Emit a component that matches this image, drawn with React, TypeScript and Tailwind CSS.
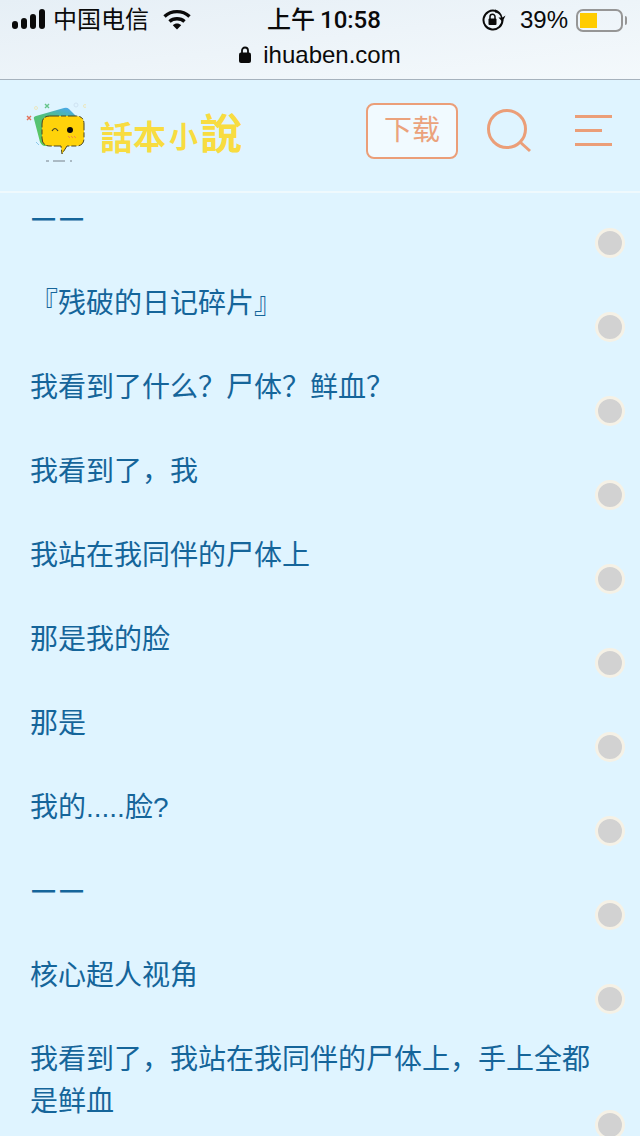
const paragraphs = [
  '一一',
  '『残破的日记碎片』',
  '我看到了什么\uFF1F尸体\uFF1F鲜血\uFF1F',
  '我看到了\uFF0C我',
  '我站在我同伴的尸体上',
  '那是我的脸',
  '那是',
  '我的.....脸?',
  '一一',
  '核心超人视角',
  '我看到了\uFF0C我站在我同伴的尸体上\uFF0C手上全都是鲜血',
];

function Signal() {
  return (
    <svg width="34" height="22" viewBox="0 0 34 22" className="shrink-0">
      <rect x="0" y="12" width="6" height="8" rx="3" fill="#0a0a0a" />
      <rect x="9" y="9" width="6" height="11" rx="3" fill="#0a0a0a" />
      <rect x="18" y="5" width="6" height="15" rx="3" fill="#0a0a0a" />
      <rect x="27" y="0" width="6" height="20" rx="3" fill="#0a0a0a" />
    </svg>
  );
}

function Wifi() {
  return (
    <svg width="28" height="22" viewBox="0 0 28 22" className="shrink-0">
      <path d="M1.5 7.5C8.5 1 19.5 1 26.5 7.5" fill="none" stroke="#0a0a0a" strokeWidth="3.4" />
      <path d="M6.5 12.5C10.5 8.8 17.5 8.8 21.5 12.5" fill="none" stroke="#0a0a0a" strokeWidth="3.4" />
      <path d="M9.8 16.2C12 14 16 14 18.2 16.2L14 20.5Z" fill="#0a0a0a" />
    </svg>
  );
}

function RotationLock() {
  return (
    <svg width="24" height="22" viewBox="0 0 24 22" className="shrink-0">
      <path d="M20.5 11A9.5 9.5 0 1 1 14 2" fill="none" stroke="#0a0a0a" strokeWidth="2" />
      <path d="M13 0.5C17 1.5 19.5 4 20.5 8.5L23.5 6.5L20.5 13L16.5 8.5L19 8.5C18 5.5 16 4 13 3.5Z" fill="#0a0a0a" />
      <rect x="6.5" y="9.5" width="8" height="6.5" rx="1" fill="#0a0a0a" />
      <path d="M8 10V7.8a2.5 2.5 0 0 1 5 0V10" fill="none" stroke="#0a0a0a" strokeWidth="1.5" />
    </svg>
  );
}

function Logo() {
  return (
    <svg width="60" height="64" viewBox="0 0 60 64" className="shrink-0">
      <defs>
        <linearGradient id="card" x1="0.7" y1="0" x2="0.3" y2="1">
          <stop offset="0" stopColor="#4aa8ec" />
          <stop offset="0.35" stopColor="#52c07c" />
          <stop offset="1" stopColor="#5cc85a" />
        </linearGradient>
      </defs>
      <path d="M8 20Q7 18 10 17L38 9Q41 8 43 10L50 17L56 42L19 47Q16 47 14 43L8 20Z" fill="url(#card)" />
      <path
        d="M24 17H50Q58 17 58 25V39Q58 47 50 47H41L36 55L35 47H24Q16 47 16 39V25Q16 17 24 17Z"
        fill="#ffd30a"
        stroke="#4a4420"
        strokeWidth="1"
        strokeDasharray="9 2 5 2"
      />
      <path d="M26 32Q29 27 32 32" fill="none" stroke="#3a3a2a" strokeWidth="1.2" />
      <circle cx="44" cy="31" r="3" fill="#0a0a0a" />
      <path d="M45 37L47 39M48 37L50 39M42 37L44 39" stroke="#f08a4a" strokeWidth="1" />
      <path d="M20 62H23M27 62H39M44 62H46" stroke="#77808a" strokeWidth="1" />
      <path d="M1 17L5 21M5 17L1 21" stroke="#e2725b" strokeWidth="1.4" />
      <path d="M19 5L23 9M23 5L19 9" stroke="#66c58a" strokeWidth="1.4" />
      <circle cx="50" cy="6" r="2" fill="none" stroke="#cfe3f2" strokeWidth="1" />
      <circle cx="59" cy="7" r="1.5" fill="none" stroke="#ece8c0" strokeWidth="1" />
      <circle cx="10" cy="9" r="1.5" fill="none" stroke="#ece8c0" strokeWidth="1" />
      <path d="M10 43L13 46" stroke="#8cc8ea" strokeWidth="1" />
    </svg>
  );
}

function StatusBar() {
  return (
    <div className="h-[80px] border-b border-[#a6b2bd] bg-gradient-to-br from-[#e6eff6] to-[#f4f9fc] text-[#0a0a0a]">
      <div className="flex h-[40px] items-center pl-3 pr-[13px]">
        <div className="flex w-[255px] items-center">
          <Signal />
          <span className="ml-[7px] text-[24px] leading-none">中国电信</span>
          <span className="ml-[14px] flex">
            <Wifi />
          </span>
        </div>
        <div className="flex items-center text-[24px] font-medium leading-none [font-family:'Roboto','Noto_Sans_CJK_SC',sans-serif]">
          上午<span className="ml-[5px]">10:58</span>
        </div>
        <div className="ml-auto flex w-[145px] items-center">
          <RotationLock />
          <span className="ml-[14px] text-[24px] leading-none">39%</span>
          <div className="ml-2 flex h-[23px] w-[47px] items-center rounded-[7px] border-2 border-[#969696] p-[2px]">
            <div className="h-[15px] w-[17px] bg-[#ffcc00]" />
          </div>
          <div className="ml-[2px] h-[9px] w-[2px] rounded-r-full bg-[#969696]" />
        </div>
      </div>
      <div className="flex h-[29px] items-center justify-center text-[24px] leading-none">
        <svg width="12" height="17" viewBox="0 0 12 17" className="mr-3 shrink-0">
          <path d="M3 7V4.5a3 3 0 0 1 6 0V7" fill="none" stroke="#0a0a0a" strokeWidth="1.8" />
          <rect x="0" y="6.5" width="12" height="10.5" rx="2" fill="#0a0a0a" />
        </svg>
        ihuaben.com
      </div>
    </div>
  );
}

function Header() {
  return (
    <div className="flex h-[113px] items-center border-b-2 border-[#eff9fd] pb-[10px] pl-[26px] pr-[28px]">
      <Logo />
      <div className="ml-[14px] mt-[6px] flex items-center font-bold leading-none text-[#f8dc40] [font-family:'Noto_Sans_CJK_TC',sans-serif]">
        <span className="mt-[5px] text-[33px]">話</span>
        <span className="mt-[4px] text-[33px]">本</span>
        <span className="ml-[3px] mt-[4px] text-[29px]">小</span>
        <span className="-mt-[6px] ml-[2px] text-[42px]">說</span>
      </div>
      <button className="ml-auto h-[56px] w-[92px] rounded-[8px] border-2 border-[#eb9e78] bg-[#f1faff] text-[28px] leading-none text-[#eba27c]">
        下载
      </button>
      <svg width="44" height="44" viewBox="0 0 44 44" className="ml-[29px] shrink-0">
        <circle cx="20" cy="20" r="18.5" fill="none" stroke="#eb9e78" strokeWidth="3" />
        <path d="M33 33L43 42" stroke="#eb9e78" strokeWidth="3" />
      </svg>
      <div className="ml-[44px] flex w-[37px] shrink-0 flex-col gap-[11px]">
        <div className="h-[3px] w-[37px] bg-[#eb9e78]" />
        <div className="h-[3px] w-[27px] bg-[#eb9e78]" />
        <div className="h-[3px] w-[37px] bg-[#eb9e78]" />
      </div>
    </div>
  );
}

export default function App() {
  return (
    <div className="h-[1136px] w-[640px] overflow-hidden bg-[#dff4ff] [font-family:'Liberation_Sans','Noto_Sans_CJK_SC',sans-serif]">
      <StatusBar />
      <Header />
      <div className="px-[30px] pt-[6px]">
        {paragraphs.map((text, i) => (
          <p
            key={i}
            className={
              text === '一一'
                ? 'relative pb-[42px] text-[28px] font-medium leading-[42px] text-[#15659a]'
                : 'relative pb-[42px] text-[28px] leading-[42px] text-[#15659a]'
            }
          >
            {text === '一一' ? (
              <span className="flex gap-[3px] pl-[1px] text-[25px]">
                <span>一</span>
                <span>一</span>
              </span>
            ) : (
              text
            )}
            <span className="absolute bottom-[25px] right-[-15px] h-[30px] w-[30px] rounded-full border-[3px] border-[#f5f1e6] bg-[#d2d2d2]" />
          </p>
        ))}
      </div>
    </div>
  );
}
